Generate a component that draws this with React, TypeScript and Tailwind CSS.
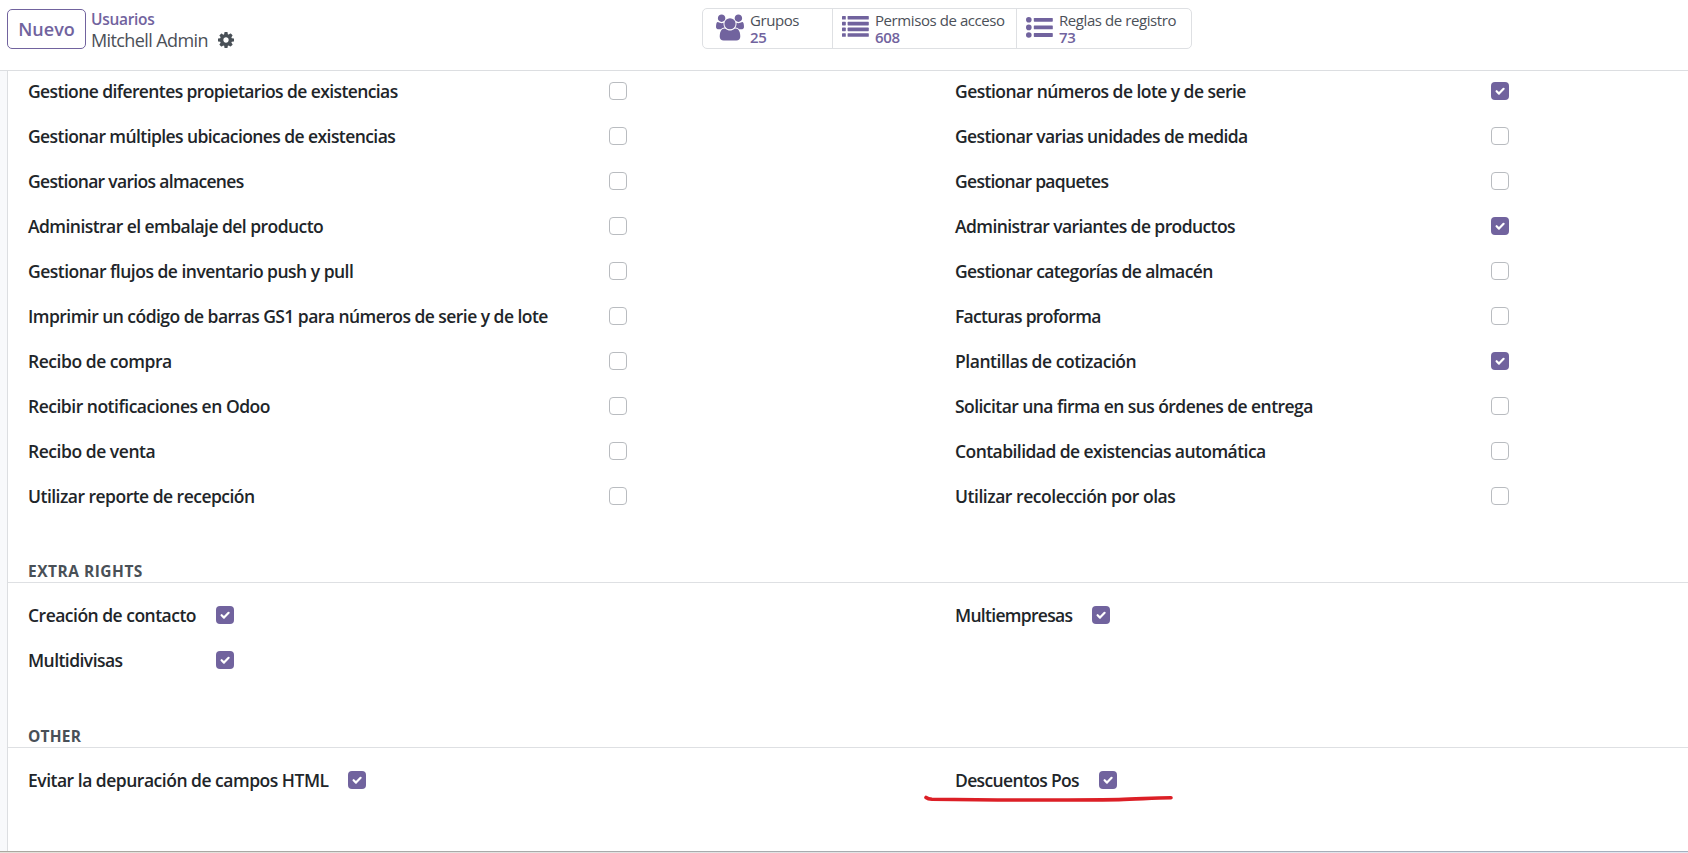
import React from "react";

const COG =
  "M1024 896q0-106-75-181t-181-75-181 75-75 181 75 181 181 75 181-75 75-181zm512-109v222q0 12-8 23t-20 13l-185 28q-19 54-39 91 35 50 107 138 10 12 10 25t-9 23q-27 37-99 108t-94 71q-12 0-26-9l-138-108q-44 23-91 38-16 136-29 186-7 28-36 28h-222q-14 0-24.500-8.500t-11.500-21.500l-28-184q-49-16-90-37l-141 107q-10 9-25 9-14 0-25-11-126-114-165-168-7-10-7-23 0-12 8-23 15-21 51-66.500t54-70.500q-27-50-41-99l-183-27q-13-2-21-12.500t-8-23.500v-222q0-12 8-23t19-13l186-28q14-46 39-92-40-57-107-138-10-12-10-24 0-10 9-23 26-36 98.500-107.500t94.500-71.500q13 0 26 10l138 107q44-23 91-38 16-136 29-186 7-28 36-28h222q14 0 24.500 8.500t11.500 21.500l28 184q49 16 90 37l142-107q9-9 24-9 13 0 25 10 129 119 165 170 7 8 7 22 0 12-8 23-15 21-51 66.500t-54 70.500q26 50 41 98l183 28q13 2 21 12.500t8 23.500z";
const USERS =
  "M593 896q-162 5-265 128h-134q-82 0-138-40.500t-56-118.500q0-353 124-353 6 0 43.500 21t97.500 42.500 119 21.500q67 0 133-23-5 37-5 66 0 139 81 256zm1071 637q0 120-73 189.500t-194 69.500h-874q-121 0-194-69.500t-73-189.500q0-53 3.500-103.500t14-109 26.500-108.500 43-97.500 62-81 85.500-53.500 111.500-20q10 0 43 21.500t73 48 107 48 135 21.500 135-21.500 107-48 73-48 43-21.500q61 0 111.500 20t85.500 53.500 62 81 43 97.500 26.500 108.500 14 109 3.500 103.500zm-1024-1277q0 106-75 181t-181 75-181-75-75-181 75-181 181-75 181 75 75 181zm704 384q0 159-112.500 271.500t-271.500 112.500-271.500-112.500-112.500-271.500 112.500-271.500 271.500-112.500 271.500 112.500 112.500 271.500zm576 225q0 78-56 118.500t-138 40.500h-134q-103-123-265-128 81-117 81-256 0-29-5-66 66 23 133 23 59 0 119-21.500t97.500-42.500 43.500-21q124 0 124 353zm-128-609q0 106-75 181t-181 75-181-75-75-181 75-181 181-75 181 75 75 181z";

type Item = { label: string; checked?: boolean; tracking: string };

const LEFT: Item[] = [
  { label: "Gestione diferentes propietarios de existencias", tracking: "tracking-[-0.6px]" },
  { label: "Gestionar múltiples ubicaciones de existencias", tracking: "tracking-[-0.58px]" },
  { label: "Gestionar varios almacenes", tracking: "tracking-[-0.68px]" },
  { label: "Administrar el embalaje del producto", tracking: "tracking-[-0.55px]" },
  { label: "Gestionar flujos de inventario push y pull", tracking: "tracking-[-0.51px]" },
  { label: "Imprimir un código de barras GS1 para números de serie y de lote", tracking: "tracking-[-0.54px]" },
  { label: "Recibo de compra", tracking: "tracking-[-0.46px]" },
  { label: "Recibir notificaciones en Odoo", tracking: "tracking-[-0.49px]" },
  { label: "Recibo de venta", tracking: "tracking-[-0.46px]" },
  { label: "Utilizar reporte de recepción", tracking: "tracking-[-0.52px]" },
];

const RIGHT: Item[] = [
  { label: "Gestionar números de lote y de serie", checked: true, tracking: "tracking-[-0.55px]" },
  { label: "Gestionar varias unidades de medida", tracking: "tracking-[-0.6px]" },
  { label: "Gestionar paquetes", tracking: "tracking-[-0.7px]" },
  { label: "Administrar variantes de productos", checked: true, tracking: "tracking-[-0.59px]" },
  { label: "Gestionar categorías de almacén", tracking: "tracking-[-0.6px]" },
  { label: "Facturas proforma", tracking: "tracking-[-0.7px]" },
  { label: "Plantillas de cotización", checked: true, tracking: "tracking-[-0.46px]" },
  { label: "Solicitar una firma en sus órdenes de entrega", tracking: "tracking-[-0.56px]" },
  { label: "Contabilidad de existencias automática", tracking: "tracking-[-0.56px]" },
  { label: "Utilizar recolección por olas", tracking: "tracking-[-0.46px]" },
];

function Check({ checked }: { checked?: boolean }) {
  return checked ? (
    <span className="flex size-[18px] shrink-0 items-center justify-center rounded-[4px] bg-[#71639e]">
      <svg viewBox="0 0 18 18" className="size-[18px]" fill="none" stroke="#fff" strokeWidth="2.2" strokeLinecap="round" strokeLinejoin="round">
        <path d="M5.6 9.2l2.4 2.4 4.6-4.8" />
      </svg>
    </span>
  ) : (
    <span className="size-[18px] shrink-0 rounded-[4px] border border-[#b9bcc0] bg-white" />
  );
}

function Row({ item, width }: { item: Item; width: string }) {
  return (
    <div className="flex h-[45px] items-center">
      <div className={`${width} shrink-0 whitespace-nowrap pt-px`}>
        <span className={item.tracking}>{item.label}</span>
      </div>
      <Check checked={item.checked} />
    </div>
  );
}

function Stat({ icon, label, value, className }: { icon: React.ReactNode; label: string; value: string; className: string }) {
  return (
    <div className={`flex h-full ${className}`}>
      {icon}
      <div className="whitespace-nowrap pt-[3px] text-[15px] leading-[17px]">
        <div className="tracking-[-0.42px] text-[#4b5058]">{label}</div>
        <div className="font-semibold tracking-[-0.3px] text-[#71639e]">{value}</div>
      </div>
    </div>
  );
}

function Section({ title, className }: { title: string; className: string }) {
  return (
    <h2 className={`border-b border-[#dee0e3] pl-[20px] text-[15.5px] font-bold leading-[22px] text-[#495057] ${className}`}>
      <span>{title}</span>
    </h2>
  );
}

export default function App() {
  return (
    <div className="flex h-[853px] w-[1688px] flex-col overflow-hidden bg-white font-['Open_Sans','Noto_Sans',sans-serif] text-[#212529]">
      <header className="flex h-[71px] shrink-0 items-start border-b border-[#dcdee1] pl-[7px]">
        <button className="mt-[9px] flex h-[40px] w-[79px] items-center justify-center rounded-[5px] border border-[#71639e] text-[18px] font-semibold text-[#71639e]">
          <span>Nuevo</span>
        </button>
        <div className="ml-[5px] mt-[9px] w-[611px] whitespace-nowrap">
          <div className="text-[15.5px] font-semibold leading-[21px] tracking-[-0.3px] text-[#71639e]"><span>Usuarios</span></div>
          <div className="flex items-center text-[18px] leading-[20px] text-[#4b5058]">
            <span className="w-[117px] tracking-[-0.6px]">Mitchell Admin</span>
            <svg viewBox="0 128 1536 1536" className="ml-[10px] size-[16px] fill-[#495057]"><path d={COG} /></svg>
          </div>
        </div>
        <div className="mt-[8px] flex h-[41px] w-[490px] rounded-[5px] border border-[#dee0e3]">
          <Stat
            className="w-[130px] border-r border-[#dee0e3] pl-[13px]"
            label="Grupos"
            value="25"
            icon={<svg viewBox="0 0 1920 1792" className="mr-[6px] mt-[5px] h-[27px] w-[28px] fill-[#71639e]"><path d={USERS} /></svg>}
          />
          <Stat
            className="w-[184px] border-r border-[#dee0e3] pl-[9px]"
            label="Permisos de acceso"
            value="608"
            icon={
              <svg viewBox="0 0 27 21" className="mr-[6px] mt-[7px] h-[21px] w-[27px] fill-[#71639e]">
                {[0, 5.8, 11.6, 17.2].map((y) => (
                  <g key={y}>
                    <rect x="0" y={y} width="3.8" height="3.6" rx="0.6" />
                    <rect x="5.6" y={y} width="21.2" height="3.6" rx="0.6" />
                  </g>
                ))}
              </svg>
            }
          />
          <Stat
            className="pl-[9px]"
            label="Reglas de registro"
            value="73"
            icon={
              <svg viewBox="0 0 27 21" className="mr-[6px] mt-[8px] h-[21px] w-[27px] fill-[#71639e]">
                {[2.8, 10.4, 18].map((y) => (
                  <g key={y}>
                    <circle cx="2.8" cy={y} r="2.8" />
                    <rect x="7.8" y={y - 1.9} width="19" height="3.8" rx="0.6" />
                  </g>
                ))}
              </svg>
            }
          />
        </div>
      </header>

      <main className="flex h-[780px] shrink-0 bg-[#f8f9fb] pl-[7px]">
        <div className="flex flex-1 flex-col border-l border-[#dcdee1] bg-white text-[17.5px] font-[560]">
          <div className="flex pl-[20px]">
            <div className="-mt-[3px] w-[927px]">
              {LEFT.map((i) => <Row key={i.label} item={i} width="w-[581px]" />)}
            </div>
            <div className="-mt-[3px]">
              {RIGHT.map((i) => <Row key={i.label} item={i} width="w-[536px]" />)}
            </div>
          </div>

          <Section title="EXTRA RIGHTS" className="mt-[42px] tracking-[0.5px]" />
          <div className="flex pl-[20px] pt-[9px]">
            <div className="w-[927px]">
              <Row item={{ label: "Creación de contacto", checked: true, tracking: "tracking-[-0.51px]" }} width="w-[188px]" />
              <Row item={{ label: "Multidivisas", checked: true, tracking: "tracking-[-0.55px]" }} width="w-[188px]" />
            </div>
            <Row item={{ label: "Multiempresas", checked: true, tracking: "tracking-[-0.7px]" }} width="w-[137px]" />
          </div>

          <Section title="OTHER" className="mt-[43px] tracking-[0.2px]" />
          <div className="flex pl-[20px] pt-[9px]">
            <div className="w-[927px]">
              <Row item={{ label: "Evitar la depuración de campos HTML", checked: true, tracking: "tracking-[-0.49px]" }} width="w-[320px]" />
            </div>
            <div className="relative">
              <Row item={{ label: "Descuentos Pos", checked: true, tracking: "tracking-[-0.65px]" }} width="w-[144px]" />
              <svg viewBox="0 0 250 8" className="absolute -left-[31px] top-[38px] h-[8px] w-[250px]" fill="none" stroke="#dc1f26" strokeWidth="3.6" strokeLinecap="round">
                <path d="M2 2.5Q4 4 8 4.200C70 5 150 5.200 195 4.600C215 4 230 3 247 2.700" />
              </svg>
            </div>
          </div>
        </div>
      </main>
      <div className="h-px bg-linear-to-r from-[#aaa79f] to-[#a6b0bf]" />
      <div className="h-px bg-linear-to-r from-[#e3e1da] to-[#e0e7f0]" />
    </div>
  );
}
